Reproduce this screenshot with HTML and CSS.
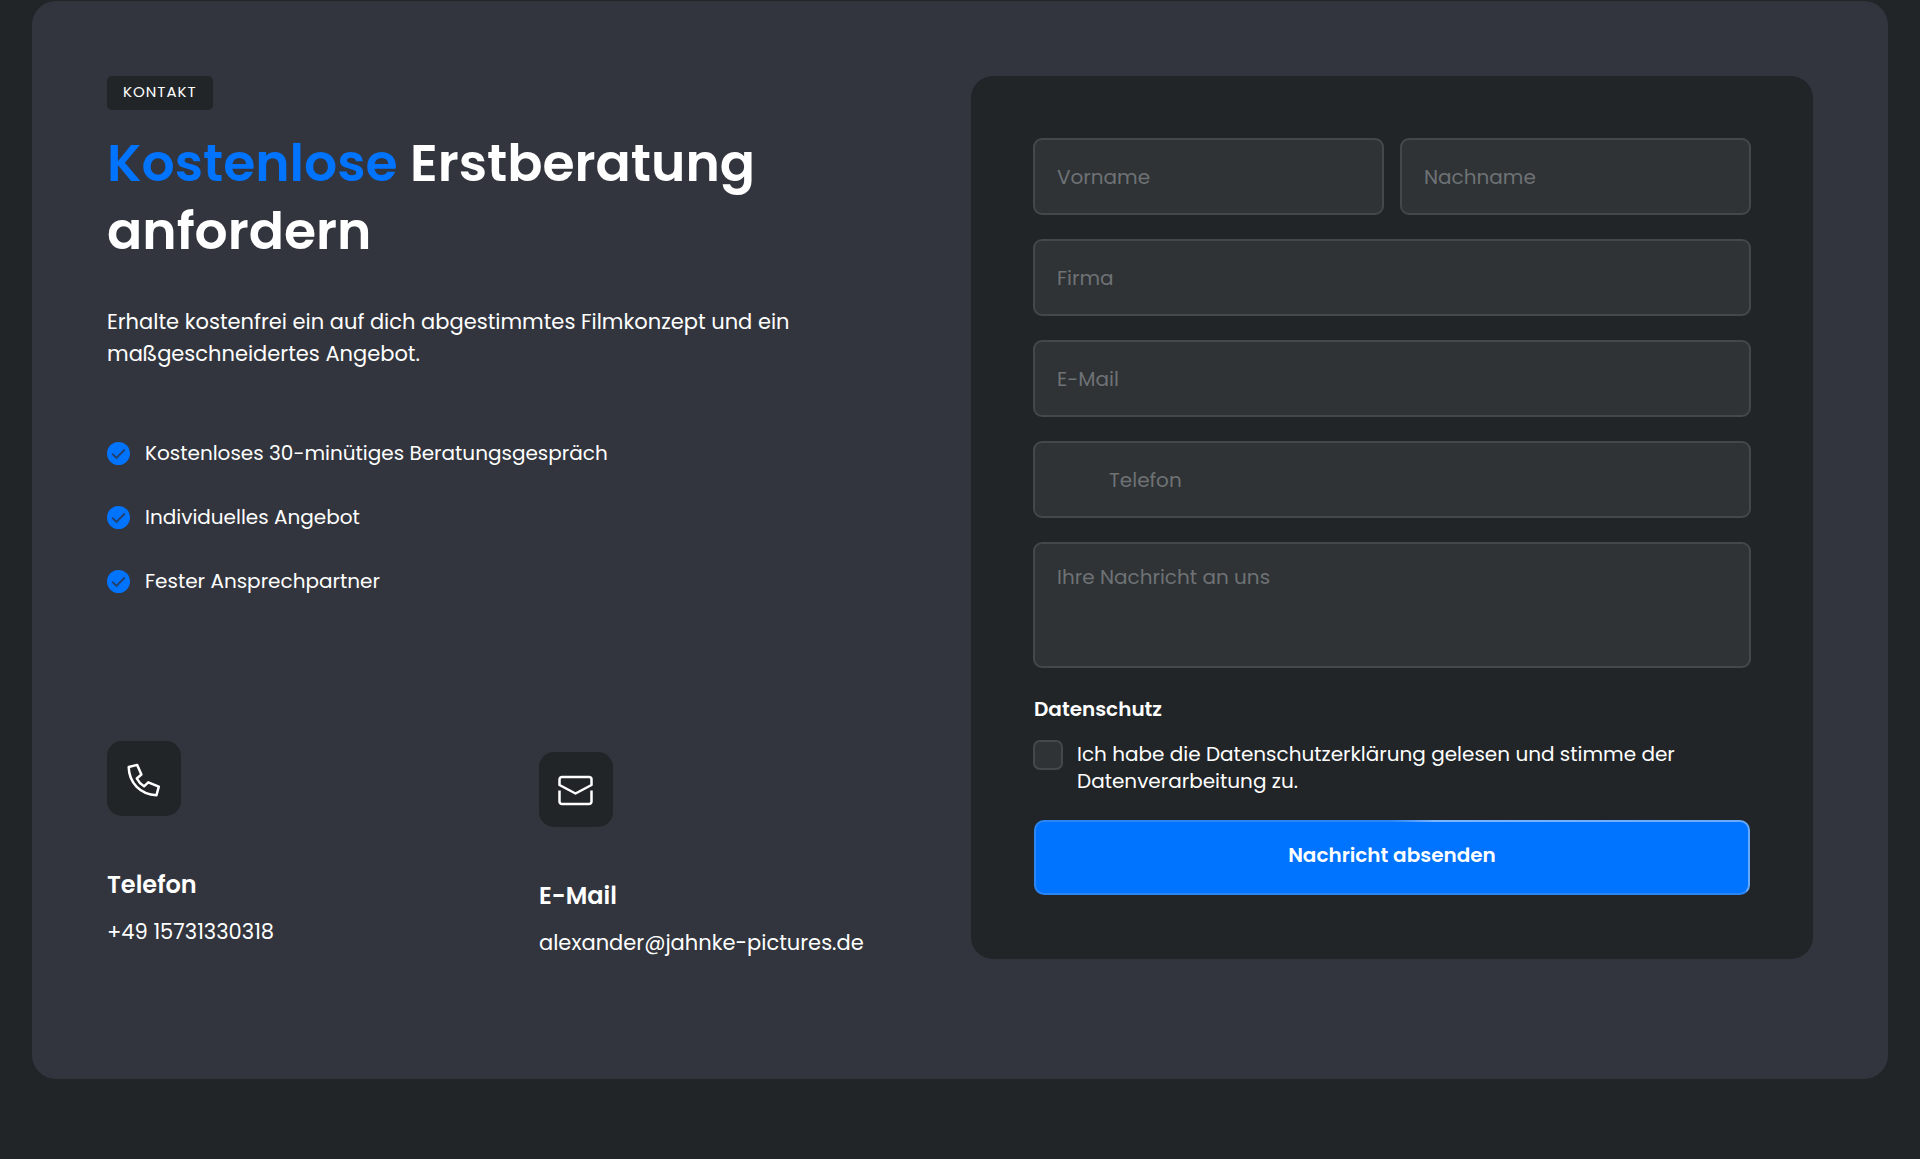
FILE: index.html
```html
<!doctype html>
<html lang="de">
<head>
  <meta charset="utf-8">
  <meta name="viewport" content="width=device-width, initial-scale=1">
  <title>Kontakt</title>
  <link rel="stylesheet" href="styles.css">
</head>
<body>
<section class="contact">
  <div class="contact_info">
    <span class="badge">KONTAKT</span>
    <h2 class="headline"><span class="headline_accent">Kostenlose</span> Erstberatung anfordern</h2>
    <p class="intro">Erhalte kostenfrei ein auf dich abgestimmtes Filmkonzept und ein maßgeschneidertes Angebot.</p>

    <ul class="benefits">
      <li>
        <svg class="benefits_icon" viewBox="0 0 24 24" aria-hidden="true"><circle cx="12" cy="12" r="12"/><path d="M5.4 12.2l4.4 4.4 8.8-8.8"/></svg>
        Kostenloses 30-minütiges Beratungsgespräch
      </li>
      <li>
        <svg class="benefits_icon" viewBox="0 0 24 24" aria-hidden="true"><circle cx="12" cy="12" r="12"/><path d="M5.4 12.2l4.4 4.4 8.8-8.8"/></svg>
        Individuelles Angebot
      </li>
      <li>
        <svg class="benefits_icon" viewBox="0 0 24 24" aria-hidden="true"><circle cx="12" cy="12" r="12"/><path d="M5.4 12.2l4.4 4.4 8.8-8.8"/></svg>
        Fester Ansprechpartner
      </li>
    </ul>

    <div class="channels">
      <div class="channel">
        <span class="channel_icon">
          <svg viewBox="0 0 36 36" aria-hidden="true"><path d="M2.7 5L11.2 2.9L15.4 12.5L10.8 16.5C12.5 19.8 14.8 22.3 18 24.3L22.3 20.3L32.8 24.7L30.5 33.2C14.5 32.5 3 21 2.7 5Z"/></svg>
        </span>
        <h3 class="channel_title">Telefon</h3>
        <a class="channel_link" href="tel:+4915731330318">+49 15731330318</a>
      </div>
      <div class="channel channel-low">
        <span class="channel_icon">
          <svg viewBox="0 0 36 36" aria-hidden="true"><path d="M1.5 12V6.5a2.5 2.5 0 0 1 2.5-2.5h27a2.5 2.5 0 0 1 2.5 2.5V12l-16 8.5zM1.5 17.5v11a2.5 2.5 0 0 0 2.5 2.5h27a2.5 2.5 0 0 0 2.5-2.5v-11"/></svg>
        </span>
        <h3 class="channel_title">E-Mail</h3>
        <a class="channel_link" href="mailto:alexander@jahnke-pictures.de">alexander@jahnke-pictures.de</a>
      </div>
    </div>
  </div>

  <form class="form">
    <div class="form_row">
      <input class="field" type="text" name="vorname" placeholder="Vorname" aria-label="Vorname">
      <input class="field" type="text" name="nachname" placeholder="Nachname" aria-label="Nachname">
    </div>
    <input class="field" type="text" name="firma" placeholder="Firma" aria-label="Firma">
    <input class="field" type="email" name="email" placeholder="E-Mail" aria-label="E-Mail">
    <input class="field field-phone" type="tel" name="telefon" placeholder="Telefon" aria-label="Telefon">
    <textarea class="field field-message" name="nachricht" placeholder="Ihre Nachricht an uns" aria-label="Ihre Nachricht an uns"></textarea>

    <fieldset class="privacy">
      <legend class="privacy_title">Datenschutz</legend>
      <div class="privacy_row">
        <input class="privacy_check" type="checkbox" id="privacy" name="datenschutz">
        <label class="privacy_label" for="privacy">Ich habe die Datenschutzerklärung gelesen und stimme der Datenverarbeitung zu.</label>
      </div>
    </fieldset>
    <button class="submit" type="submit">Nachricht absenden</button>
  </form>
</section>
</body>
</html>
```
FILE: styles.css
```css
* {
  box-sizing: border-box;
}
body {
  margin: 0;
  padding: 1px 32px 80px;
  background: #212528;
  color: #fff;
  font-family: Poppins, Inter, sans-serif;
  font-size: 20px;
  line-height: 27px;
}
h2, h3, p, ul {
  margin: 0;
  padding: 0;
}

.contact {
  display: grid;
  grid-template-columns: 1fr 1fr;
  gap: 22px;
  align-items: start;
  padding: 75px 75px 120px;
  border-radius: 24px;
  background: #32353d;
}

/* left column */
.badge {
  display: block;
  width: fit-content;
  padding: 0 16px 2px;
  border-radius: 5px;
  background: #212528;
  font-size: 15px;
  line-height: 32px;
  letter-spacing: 1px;
}
.headline {
  margin-top: 19px;
  font-size: 52px;
  font-weight: 600;
  line-height: 68px;
}
.headline_accent {
  color: #0073ff;
}
.intro {
  margin-top: 41px;
  max-width: 740px;
  font-size: 21px;
  line-height: 32px;
}
.benefits {
  display: grid;
  gap: 32px;
  margin-top: 67px;
  list-style: none;
  line-height: 32px;
}
.benefits li {
  display: flex;
  align-items: center;
  gap: 15px;
}
.benefits_icon {
  width: 23px;
  height: 23px;
  flex: none;
}
.benefits_icon circle {
  fill: #0073ff;
}
.benefits_icon path {
  fill: none;
  stroke: #24406b;
  stroke-width: 2;
}
.channels {
  display: grid;
  grid-template-columns: 1fr 1fr;
  gap: 22px;
  align-items: start;
  margin-top: 144px;
}
.channel-low {
  padding-top: 11px;
}
.channel_icon {
  display: flex;
  align-items: center;
  justify-content: center;
  width: 74px;
  height: 75px;
  padding-top: 2px;
  border-radius: 15px;
  background: #212528;
}
.channel_icon svg {
  width: 36px;
  height: 36px;
  fill: none;
  stroke: #fff;
  stroke-width: 2.5;
  stroke-linejoin: round;
}
.channel_title {
  margin-top: 52px;
  font-size: 24px;
  font-weight: 600;
  line-height: 34px;
}
.channel_link {
  display: block;
  margin-top: 14px;
  color: #fff;
  font-size: 21px;
  line-height: 32px;
  text-decoration: none;
}

/* form */
.form {
  display: flex;
  flex-direction: column;
  gap: 24px;
  padding: 62px 62px 64px;
  border-radius: 22px;
  background: #212528;
}
.form_row {
  display: grid;
  grid-template-columns: 1fr 1fr;
  gap: 16px;
}
.field {
  display: block;
  width: 100%;
  height: 77px;
  padding: 0 22px;
  border: 2px solid #45484b;
  border-radius: 9px;
  background: #2f3336;
  color: #fff;
  font: inherit;
}
.field::placeholder {
  color: #6e7275;
  opacity: 1;
}
.field-phone {
  padding-left: 74px;
}
.field-message {
  height: 126px;
  padding-top: 20px;
  resize: none;
}
.privacy {
  margin: 4px 0 0;
  padding: 0;
  border: 0;
}
.privacy_title {
  padding: 0 1px;
  font-weight: 600;
}
.privacy_row {
  display: flex;
  align-items: flex-start;
  gap: 14px;
  margin-top: 17px;
}
.privacy_check {
  appearance: none;
  flex: none;
  width: 30px;
  height: 30px;
  margin: 0;
  border: 2px solid #45484b;
  border-radius: 7px;
  background: #2f3336;
}
.privacy_check:checked {
  background: #0073ff;
}
.privacy_label {
  padding-top: 1px;
}
.submit {
  height: 75px;
  margin: 1px 1px 0;
  padding: 0 0 4px;
  border: 2px solid transparent;
  border-bottom-color: #2b85f5;
  border-radius: 10px;
  background:
    linear-gradient(#0073ff, #0073ff) padding-box,
    linear-gradient(90deg, #2b85f5 50%, #7ab5ff 56%, #68a9fb) border-box;
  color: #fff;
  font: inherit;
  font-weight: 600;
  cursor: pointer;
}
```
